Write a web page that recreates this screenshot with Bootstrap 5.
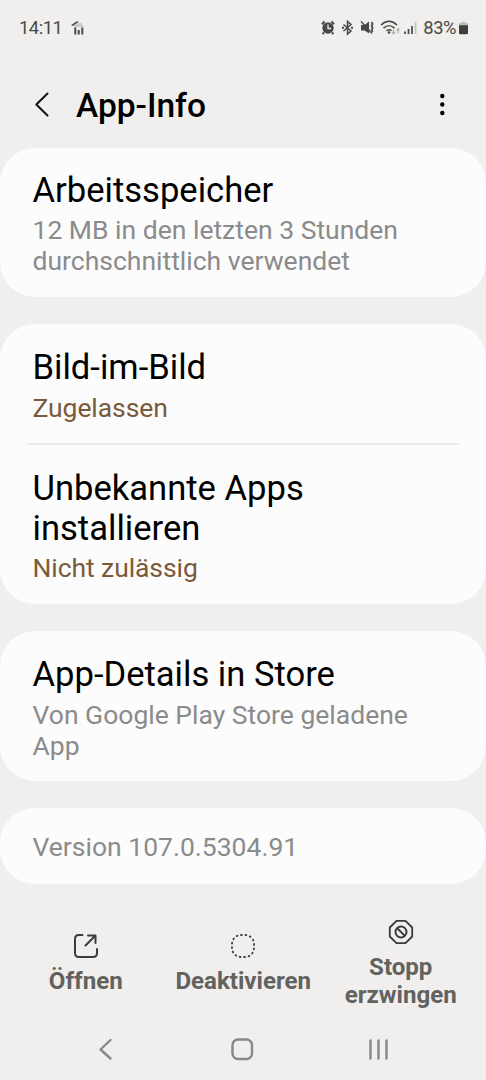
<!DOCTYPE html>
<html lang="de">
<head>
<meta charset="utf-8">
<meta name="viewport" content="width=device-width, initial-scale=1">
<title>App-Info</title>
<link href="https://cdn.jsdelivr.net/npm/bootstrap@5.3.0/dist/css/bootstrap.min.css" rel="stylesheet">
<style>
  body { background: #f0efed; font-family: Roboto, "Noto Sans", sans-serif; color: #000; }
  .screen { height: 1080px; overflow: hidden; }
  svg { display: block; flex: none; overflow: visible; }
  .status-bar { height: 55px; padding: 0 18px 0 19px; font-size: 18.4px; letter-spacing: -.5px; color: #4a4a48; line-height: 22px; }
  .status-mark { margin-left: 9px; }
  .battery { margin-left: 3px; }
  .app-bar { height: 93px; padding: 7px 32px 0 35px; }
  .app-title { font-size: 33.5px; line-height: 40px; font-weight: 500; margin: 1px 0 0 27px; }
  .panels { gap: 27px; }
  .panel { background: #fcfcfc; border: 0; border-radius: 35px; --bs-card-bg: #fcfcfc; }
  .entry { background: transparent; border: 0; padding: 23.5px 32.5px 20px; color: #000; }
  .entry-memory { padding: 21.5px 32.5px 20px; }
  .entry + .entry::before { content: ""; display: block; height: 2px; background: #ececeb; margin: -23.5px -5.5px 22.5px; }
  .entry-title { font-size: 34.6px; line-height: 40px; font-weight: 400; margin: 0; }
  .entry-sub { font-size: 26.5px; line-height: 31px; margin: 4.500px 0 .5px; color: #8b8b8b; }
  .entry-sub.accent { color: #7b5a3b; letter-spacing: -.08px; }
  .version { height: 75.5px; padding: 23px 32.5px; }
  .version .entry-sub { margin: 0; }
  .actions { height: 107px; font-size: 24.1px; line-height: 28px; font-weight: 700; color: #62625f; padding: 0 7px; }
  .action { gap: 8.500px; flex: 0 0 157.5px; }
  .sys-nav { height: 62px; padding: 0 98px; }
</style>
</head>
<body>
<div class="screen d-flex flex-column">
  <header class="status-bar d-flex align-items-center">
    <span>14:11</span>
    <svg class="status-mark" width="13" height="14" viewBox="0 0 13 14"><path d="M0 4.200 5 .8 7.500 0 6.500 2 1.500 5z" fill="#4a4a48"/><path d="M5 3h6M3 5h9.500" stroke="#c0c0bd" stroke-width="1.500"/><path d="M4.300 6.500v7M7.700 9v4.500M11.300 6.500v7" stroke="#4a4a48" stroke-width="2"/></svg>
    <div class="d-flex align-items-center ms-auto">
      <svg width="102" height="16" viewBox="0 0 102 16" fill="none" stroke="#484846">
        <circle cx="7" cy="8" r="5.700" fill="#484846" stroke="none"/><path d="M1 4.200 3.500 1.500M13 4.200 10.500 1.500M3 12.500 1.600 14M11 12.500l1.400 1.500" stroke-width="2"/><path d="M7 4.500V8.500h3" stroke="#f0efed" stroke-width="1.300"/>
        <path d="M22.500 4.500 30 11l-3.500 3V1.500L30 4.500 22.500 11" stroke-width="1.500"/><path d="M21 7.800h2M30 7.800h2" stroke-width="2"/>
        <path d="M40 5h3.500L48 1.500v12L43.500 10.500H40z" fill="#484846" stroke="none"/><path d="m40 1.500 11 12" stroke-width="1.300"/><path d="m50.500 2 1.200 2-1.200 2 1.200 2-1.200 2 1.200 2" stroke-width="1.700"/>
        <path d="M60 5C65 .1 71 .1 76 5M62.500 8.200c4-3.600 7-3.600 11 0M65.500 10.800c2-1.500 3.500-1.500 5 0" stroke-width="1.600"/><circle cx="68" cy="12.500" r="1.300" fill="#484846" stroke="none"/>
        <path d="M72.500 9.500v4.500m-1.500-2 1.500 2 1.500-2M77 13.500V8.500M75.500 10.500l1.500-2 1.500 2" stroke="#b1b1ae" stroke-width="1.200"/>
        <path d="M84 11.500V14M87.500 9v5M91 6v8" stroke-width="1.700"/><path d="M94.600 2v12" stroke="#c3c3c0" stroke-width="1.700"/>
      </svg>
      <span>83%</span>
      <svg class="battery" width="9" height="14" viewBox="0 0 10 14"><path d="M3 0h4v1.500h2q1 0 1 1V5H0V2.500q0-1 1-1h2z" fill="#bcbcb9"/><path d="M0 4h10v8.500q0 1.500-1.500 1.500h-7Q0 14 0 12.500z" fill="#3f3f3d"/></svg>
    </div>
  </header>

  <div class="app-bar d-flex align-items-center">
    <svg width="14" height="26" viewBox="0 0 14 26" fill="none" stroke="#111" stroke-width="2" stroke-linecap="round" stroke-linejoin="round"><path d="M12.500 1.500 1.300 12.500l11.200 11"/></svg>
    <h1 class="app-title">App-Info</h1>
    <svg class="ms-auto" width="20" height="22" viewBox="0 0 20 22"><circle cx="8.300" cy="2" r="2.200"/><circle cx="8.300" cy="10.500" r="2.200"/><circle cx="8.300" cy="19" r="2.200"/></svg>
  </div>

  <main class="panels d-flex flex-column">
    <section class="card panel"><div class="entry entry-memory">
      <h2 class="entry-title">Arbeitsspeicher</h2>
      <p class="entry-sub">12 MB in den letzten 3 Stunden<br>durchschnittlich verwendet</p>
    </div></section>
    <section class="card panel">
      <div class="entry"><h2 class="entry-title">Bild-im-Bild</h2><p class="entry-sub accent">Zugelassen</p></div>
      <div class="entry"><h2 class="entry-title">Unbekannte Apps<br>installieren</h2><p class="entry-sub accent">Nicht zulässig</p></div>
    </section>
    <section class="card panel"><div class="entry">
      <h2 class="entry-title">App-Details in Store</h2>
      <p class="entry-sub">Von Google Play Store geladene<br>App</p>
    </div></section>
    <section class="card panel version"><p class="entry-sub">Version 107.0.5304.91</p></section>
  </main>

  <div class="actions d-flex align-items-center text-center mt-auto">
    <div class="action d-flex flex-column align-items-center">
      <svg width="24" height="24" viewBox="0 0 24 24" fill="none" stroke="#3b3b39" stroke-width="2" stroke-linecap="round" stroke-linejoin="round"><path d="M8.500 1H5Q1 1 1 5v14q0 4 4 4h14q4 0 4-4v-4M14 1.500h7.500V9M21.500 1.500 11.500 11.500"/></svg>
      <span>Öffnen</span>
    </div>
    <div class="action d-flex flex-column align-items-center">
      <svg width="24" height="24" viewBox="0 0 24 24" fill="none" stroke="#3b3b39" stroke-width="1.800" stroke-linecap="round"><rect x="1" y="1" width="22" height="22" rx="9" pathLength="80" stroke-dasharray="1 4"/></svg>
      <span>Deaktivieren</span>
    </div>
    <div class="action d-flex flex-column align-items-center">
      <svg width="24" height="24" viewBox="0 0 24 24" fill="none" stroke="#3b3b39" stroke-width="1.800" stroke-linejoin="round"><path d="M7.500.8h9l6.700 6.700v9l-6.700 6.700h-9L.8 16.500v-9z"/><circle cx="12" cy="12" r="5.500" stroke-width="2"/><path d="m8 8 8 8"/></svg>
      <span>Stopp<br>erzwingen</span>
    </div>
  </div>

  <nav class="sys-nav d-flex align-items-center">
    <svg width="290" height="24" viewBox="0 0 290 24" fill="none" stroke="#888886" stroke-width="2.400" stroke-linecap="round" stroke-linejoin="round"><path d="m12.500 3-10 9.500 10 9"/><rect x="134.500" y="2.500" width="19.500" height="19.500" rx="5.500"/><path d="M272.500 3.500v18M280.500 3.500v18M288.500 3.500v18"/></svg>
  </nav>
</div>
<script src="https://cdn.jsdelivr.net/npm/bootstrap@5.3.0/dist/js/bootstrap.bundle.min.js"></script>
</body>
</html>
